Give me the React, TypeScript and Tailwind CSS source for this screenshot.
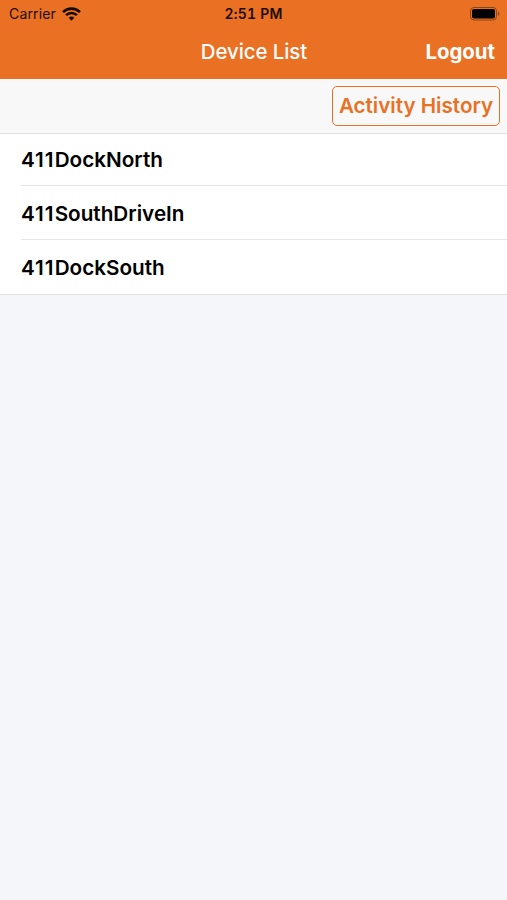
type Device = {
  id: number;
  site: string;
  name: string;
};

const devices: Device[] = [
  { id: 1, site: "411", name: "DockNorth" },
  { id: 2, site: "411", name: "SouthDriveIn" },
  { id: 3, site: "411", name: "DockSouth" },
];

function WifiIcon() {
  return (
    <svg width="19" height="14" viewBox="0 0 19 14" fill="none" stroke="#140802">
      <path d="M1 5.1a12.2 12.2 0 0 1 17 0" strokeWidth="2.6" />
      <path d="M4.1 8.1a7.8 7.8 0 0 1 10.8 0" strokeWidth="2.5" />
      <path d="M9.5 13.7 6.7 10.8a4.1 4.1 0 0 1 5.6 0z" fill="#140802" stroke="none" />
    </svg>
  );
}

function BatteryIcon() {
  return (
    <svg width="30" height="14" viewBox="0 0 30 14" fill="none">
      <rect x="0.5" y="0.5" width="26" height="12.5" rx="3.5" stroke="#8a4417" />
      <rect x="2" y="2" width="23" height="9.5" rx="2" fill="#000" />
      <path d="M28 4.6c1.8.6 1.8 3.7 0 4.3z" fill="#8a4417" />
    </svg>
  );
}

function StatusBar() {
  return (
    <div className="grid h-[27px] grid-cols-3 items-center text-[14px] text-[#1c0d03]">
      <div className="flex items-center gap-1.5 pl-[9px]">
        <span className="tracking-[0.15px]">Carrier</span>
        <WifiIcon />
      </div>
      <span className="text-center font-semibold tabular-nums tracking-[0.2px]">2:51 PM</span>
      <div className="flex justify-end pr-[7px]">
        <BatteryIcon />
      </div>
    </div>
  );
}

export default function App() {
  return (
    <div className="flex h-[900px] w-[507px] flex-col overflow-hidden bg-[#f4f6fa] font-['Inter',sans-serif]">
      <header className="h-[79px] bg-[#ea7024]">
        <StatusBar />
        <div className="grid h-[50px] grid-cols-3 items-center text-[20.4px] text-white">
          <span />
          <h1 className="pl-px text-center font-medium tracking-[-0.05px]">Device List</h1>
          <button type="button" className="pr-3 text-right font-bold">
            Logout
          </button>
        </div>
      </header>

      <div className="flex h-[55px] items-center justify-end border-b border-[#e0e0e0] bg-[#f8f8f8] pr-[7px]">
        <button
          type="button"
          className="h-10 w-[168px] whitespace-nowrap rounded-[5px] border border-[#ea7024] text-[20.6px] font-semibold text-[#ea7024]"
        >
          Activity History
        </button>
      </div>

      <ul className="border-b border-[#e0e1e4] bg-white pl-[21px]">
        {devices.map((device) => (
          <li
            key={device.id}
            className="flex h-[54px] items-center border-b border-[#e6e6e8] pt-0.5 text-[20.7px] font-semibold text-black first:h-[52px] first:pt-0 last:border-b-0"
          >
            <span className="tracking-[1px]">{device.site}</span>
            {device.name}
          </li>
        ))}
      </ul>
    </div>
  );
}
